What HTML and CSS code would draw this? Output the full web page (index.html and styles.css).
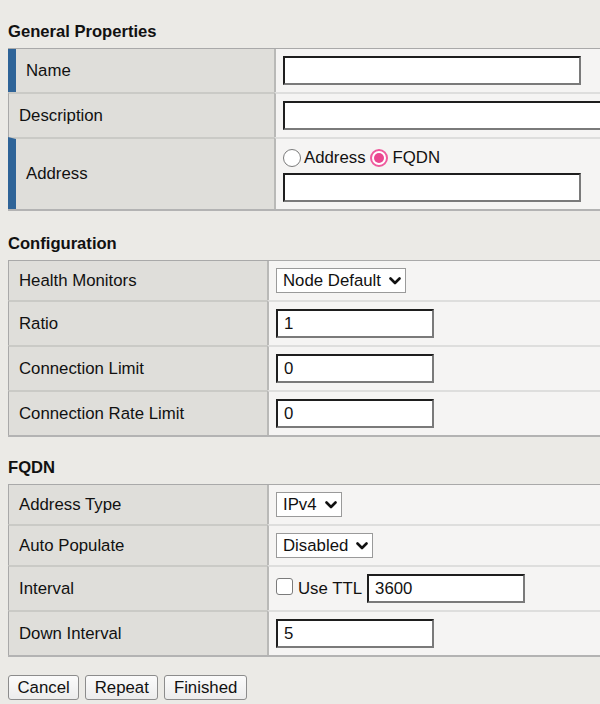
FILE: index.html
```html
<!DOCTYPE html>
<html>
<head>
<meta charset="utf-8">
<link rel="stylesheet" href="styles.css">
</head>
<body>
<div class="page">
  <h2 class="section-title first">General Properties</h2>
  <div class="props props-general">
    <div class="row">
      <div class="label required">Name</div>
      <div class="value"><input class="text long" type="text"></div>
    </div>
    <div class="row">
      <div class="label">Description</div>
      <div class="value"><input class="text wide" type="text"></div>
    </div>
    <div class="row">
      <div class="label required">Address</div>
      <div class="value">
        <div class="radio-line">
          <span class="radio"></span><span class="radio-text">Address</span>
          <span class="radio checked"><span class="dot"></span></span><span class="radio-text fq">FQDN</span>
        </div>
        <input class="text long" type="text">
      </div>
    </div>
  </div>

  <h2 class="section-title">Configuration</h2>
  <div class="props props-narrow">
    <div class="row">
      <div class="label">Health Monitors</div>
      <div class="value">
        <span class="select">Node Default<svg class="chev" viewBox="0 0 12 8" width="12" height="8"><path d="M1.5 1.5 L6 6 L10.5 1.5" fill="none" stroke="#111" stroke-width="2.6" stroke-linecap="round" stroke-linejoin="round"/></svg></span>
      </div>
    </div>
    <div class="row">
      <div class="label">Ratio</div>
      <div class="value"><input class="text short" type="text" value="1"></div>
    </div>
    <div class="row">
      <div class="label">Connection Limit</div>
      <div class="value"><input class="text short" type="text" value="0"></div>
    </div>
    <div class="row">
      <div class="label">Connection Rate Limit</div>
      <div class="value"><input class="text short" type="text" value="0"></div>
    </div>
  </div>

  <h2 class="section-title last">FQDN</h2>
  <div class="props props-narrow">
    <div class="row">
      <div class="label">Address Type</div>
      <div class="value">
        <span class="select">IPv4<svg class="chev" viewBox="0 0 12 8" width="12" height="8"><path d="M1.5 1.5 L6 6 L10.5 1.5" fill="none" stroke="#111" stroke-width="2.6" stroke-linecap="round" stroke-linejoin="round"/></svg></span>
      </div>
    </div>
    <div class="row">
      <div class="label">Auto Populate</div>
      <div class="value">
        <span class="select">Disabled<svg class="chev" viewBox="0 0 12 8" width="12" height="8"><path d="M1.5 1.5 L6 6 L10.5 1.5" fill="none" stroke="#111" stroke-width="2.6" stroke-linecap="round" stroke-linejoin="round"/></svg></span>
      </div>
    </div>
    <div class="row">
      <div class="label">Interval</div>
      <div class="value inline">
        <span class="checkbox"></span><span class="check-text">Use TTL</span>
        <input class="text short" type="text" value="3600">
      </div>
    </div>
    <div class="row">
      <div class="label">Down Interval</div>
      <div class="value"><input class="text short" type="text" value="5"></div>
    </div>
  </div>

  <div class="buttons">
    <button class="btn">Cancel</button>
    <button class="btn">Repeat</button>
    <button class="btn">Finished</button>
  </div>
</div>
</body>
</html>
```

FILE: styles.css
```css
html, body {
  margin: 0;
  padding: 0;
  overflow: hidden;
  background: #ebeae6;
}
body {
  font-family: "Liberation Sans", Arial, sans-serif;
  font-size: 16.8px;
  color: #111;
}
.page {
  width: 600px;
  height: 704px;
  overflow: hidden;
  padding: 22px 0 0 8px;
  box-sizing: border-box;
}
.section-title {
  font-size: 16.6px;
  font-weight: bold;
  line-height: 20px;
  margin: 23px 0 6px 0;
}
.section-title.first {
  margin-top: 0;
}
.section-title.last {
  margin-top: 21px;
}
.props {
  width: 640px;
  border-top: 1px solid #a9a9a9;
  border-bottom: 2px solid #b3b3b3;
}
.row {
  display: flex;
}
.row + .row .label,
.row + .row .value {
  border-top: 2px solid rgba(0, 0, 0, 0.09);
}
.label {
  box-sizing: border-box;
  flex: none;
  display: flex;
  align-items: center;
  background: #dfdeda;
  border-left: 1px solid #a9a9a9;
  padding-left: 10px;
}
.label.required {
  border-left: 8px solid #2f6498;
}
.props-general .label { width: 266px; }
.props-narrow .label { width: 259px; }
.value {
  flex: 1;
  background: #f5f4f3;
  border-left: 2px solid #b9b9b7;
  padding: 7px;
}
.value.inline {
  display: flex;
  align-items: center;
}
.text {
  box-sizing: border-box;
  height: 29px;
  display: block;
  margin: 0;
  padding: 0 6px;
  font-family: "Liberation Sans", Arial, sans-serif;
  font-size: 16.8px;
  color: #111;
  background: #fff;
  border-style: solid;
  border-width: 2px;
  border-color: #1e1e1e #7a7a7a #7a7a7a #1e1e1e;
  outline: none;
}
.text.long { width: 298px; }
.text.wide { width: 340px; }
.text.short { width: 158px; }
.radio-line {
  display: flex;
  align-items: center;
  height: 24px;
  margin: 0 0 3px 0;
}
.radio {
  box-sizing: border-box;
  width: 18px;
  height: 18px;
  border-radius: 50%;
  border: 1px solid #7b7b7b;
  background: #fff;
  display: inline-flex;
  align-items: center;
  justify-content: center;
}
.radio.checked {
  border: 2px solid #ef5a9d;
  margin-left: 4px;
}
.radio .dot {
  width: 10px;
  height: 10px;
  border-radius: 50%;
  background: #ea4690;
}
.radio-text {
  margin-left: 3px;
}
.radio-text.fq {
  margin-left: 5px;
}
.select {
  box-sizing: border-box;
  display: inline-flex;
  align-items: center;
  height: 25px;
  padding: 0 4px 0 6px;
  border: 1px solid #9a9a9a;
  background: #fff;
  vertical-align: top;
}
.chev {
  margin-left: 8px;
  margin-top: 1px;
}
.checkbox {
  box-sizing: border-box;
  width: 17px;
  height: 17px;
  border: 1px solid #7b7b7b;
  border-radius: 3px;
  background: #fff;
  margin-top: -4px;
}
.check-text {
  margin: 0 5px 0 5px;
}
.buttons {
  display: flex;
  gap: 6px;
  margin-top: 18px;
}
.btn {
  box-sizing: border-box;
  height: 25px;
  padding: 0 8.5px;
  font-family: "Liberation Sans", Arial, sans-serif;
  font-size: 16.8px;
  color: #111;
  background: linear-gradient(#fbfbfb, #ececec);
  border: 1px solid #8c8c8c;
  border-radius: 3px;
}
```
